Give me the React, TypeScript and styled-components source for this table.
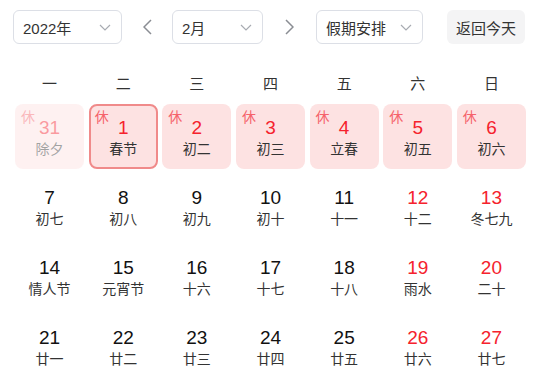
import styled, { createGlobalStyle, css } from 'styled-components';

const GlobalStyle = createGlobalStyle`
  body {
    margin: 0;
    background: #fff;
    font-family: "Liberation Sans", "Noto Sans CJK SC", sans-serif;
  }
`;

const Wrapper = styled.div`
  width: 542px;
  height: 392px;
  overflow: hidden;
`;

const Toolbar = styled.div`
  display: flex;
  align-items: center;
  height: 34px;
  margin: 10px 0 0 13px;
`;

const Select = styled.div<{ $w: number }>`
  box-sizing: border-box;
  width: ${(p) => p.$w}px;
  height: 34px;
  border: 1px solid #dcdfe6;
  border-radius: 6px;
  display: flex;
  align-items: center;
  justify-content: space-between;
  padding: 0 10px 0 9px;
  font-size: 15px;
  color: #333;
`;

const NavButton = styled.div<{ $w: number }>`
  width: ${(p) => p.$w}px;
  height: 34px;
  display: flex;
  align-items: center;
  justify-content: center;
`;

const TodayButton = styled.div`
  margin-left: 24px;
  width: 78px;
  height: 34px;
  border-radius: 6px;
  background: #f4f4f5;
  display: flex;
  align-items: center;
  justify-content: center;
  font-size: 15px;
  color: #333;
`;

const Grid = styled.div`
  display: grid;
  grid-template-columns: repeat(7, 1fr);
  column-gap: 4.5px;
  width: 511px;
  margin-left: 15px;
`;

const WeekHeader = styled(Grid)`
  margin-top: 22px;
  height: 32px;
  align-items: center;
`;

const WeekDay = styled.div`
  text-align: center;
  font-size: 15px;
  color: #333;
`;

const Days = styled(Grid)`
  margin-top: 6px;
  row-gap: 5px;
`;

const Cell = styled.div<{ $rest?: boolean; $selected?: boolean; $faded?: boolean }>`
  position: relative;
  box-sizing: border-box;
  height: 65px;
  border-radius: 8px;
  padding-top: 13px;
  display: flex;
  flex-direction: column;
  align-items: center;
  ${(p) =>
    p.$rest &&
    css`
      background: #fde2e2;
    `}
  ${(p) =>
    p.$selected &&
    css`
      border: 2px solid #f08a8a;
      padding-top: 11px;
    `}
  ${(p) =>
    p.$faded &&
    css`
      opacity: 0.45;
    `}
`;

const DayNum = styled.div<{ $red?: boolean }>`
  font-size: 19px;
  line-height: 22px;
  color: ${(p) => (p.$red ? '#f5222d' : '#111')};
`;

const Lunar = styled.div`
  margin-top: 1px;
  font-size: 14px;
  line-height: 18px;
  color: #333;
`;

const RestTag = styled.span<{ $inset: number }>`
  position: absolute;
  top: ${(p) => p.$inset - 1}px;
  left: ${(p) => p.$inset}px;
  font-size: 14px;
  line-height: 16px;
  color: #f5636b;
`;

const ChevronDown = () => (
  <svg width="12" height="7" viewBox="0 0 12 7" fill="none">
    <polyline points="1,1 6,6 11,1" stroke="#a8abb2" strokeWidth="1.2" />
  </svg>
);

const Chevron = ({ dir }: { dir: 'left' | 'right' }) => (
  <svg width="9" height="16" viewBox="0 0 9 16" fill="none">
    <polyline
      points={dir === 'left' ? '8,1 1,8 8,15' : '1,1 8,8 1,15'}
      stroke="#8a8d93"
      strokeWidth="1.5"
    />
  </svg>
);

type Day = {
  n: number;
  lunar: string;
  rest?: boolean;
  red?: boolean;
  faded?: boolean;
  selected?: boolean;
};

const days: Day[] = [
  { n: 31, lunar: '除夕', rest: true, red: true, faded: true },
  { n: 1, lunar: '春节', rest: true, red: true, selected: true },
  { n: 2, lunar: '初二', rest: true, red: true },
  { n: 3, lunar: '初三', rest: true, red: true },
  { n: 4, lunar: '立春', rest: true, red: true },
  { n: 5, lunar: '初五', rest: true, red: true },
  { n: 6, lunar: '初六', rest: true, red: true },
  { n: 7, lunar: '初七' },
  { n: 8, lunar: '初八' },
  { n: 9, lunar: '初九' },
  { n: 10, lunar: '初十' },
  { n: 11, lunar: '十一' },
  { n: 12, lunar: '十二', red: true },
  { n: 13, lunar: '冬七九', red: true },
  { n: 14, lunar: '情人节' },
  { n: 15, lunar: '元宵节' },
  { n: 16, lunar: '十六' },
  { n: 17, lunar: '十七' },
  { n: 18, lunar: '十八' },
  { n: 19, lunar: '雨水', red: true },
  { n: 20, lunar: '二十', red: true },
  { n: 21, lunar: '廿一' },
  { n: 22, lunar: '廿二' },
  { n: 23, lunar: '廿三' },
  { n: 24, lunar: '廿四' },
  { n: 25, lunar: '廿五' },
  { n: 26, lunar: '廿六', red: true },
  { n: 27, lunar: '廿七', red: true },
];

const weekdays = ['一', '二', '三', '四', '五', '六', '日'];

export default function App() {
  return (
    <Wrapper>
      <GlobalStyle />
      <Toolbar>
        <Select $w={109}>
          <span>2022年</span>
          <ChevronDown />
        </Select>
        <NavButton $w={50}>
          <Chevron dir="left" />
        </NavButton>
        <Select $w={91}>
          <span>2月</span>
          <ChevronDown />
        </Select>
        <NavButton $w={53}>
          <Chevron dir="right" />
        </NavButton>
        <Select $w={107}>
          <span>假期安排</span>
          <ChevronDown />
        </Select>
        <TodayButton>返回今天</TodayButton>
      </Toolbar>

      <WeekHeader>
        {weekdays.map((w) => (
          <WeekDay key={w}>{w}</WeekDay>
        ))}
      </WeekHeader>

      <Days>
        {days.map((d) => (
          <Cell key={d.n} $rest={d.rest} $selected={d.selected} $faded={d.faded}>
            {d.rest && <RestTag $inset={d.selected ? 4 : 6}>休</RestTag>}
            <DayNum $red={d.red}>{d.n}</DayNum>
            <Lunar>{d.lunar}</Lunar>
          </Cell>
        ))}
      </Days>
    </Wrapper>
  );
}
